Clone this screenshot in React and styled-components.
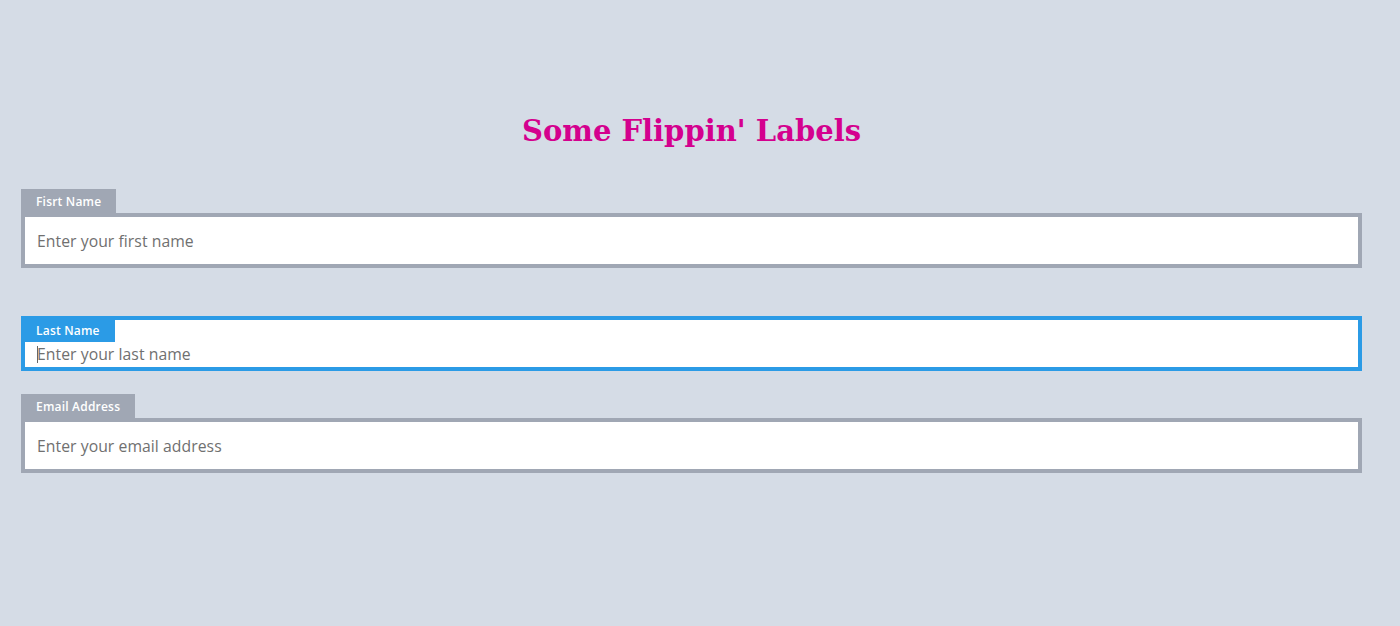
import React from "react";
import styled, { createGlobalStyle, css } from "styled-components";

const Global = createGlobalStyle`
  html, body { margin: 0; padding: 0; background: #d5dce6; }
  body { font-family: "Open Sans", "Liberation Sans", sans-serif; }
  * { box-sizing: border-box; }
`;

const Page = styled.div`
  width: 1400px;
  height: 626px;
  background: #d5dce6;
  padding: 112px 0 0 21px;
`;

const Form = styled.form`
  width: 1341px;
  display: flex;
  flex-direction: column;
  gap: 23.5px;
`;

const Title = styled.h1`
  margin: 0 0 -0.5px;
  height: 54px;
  text-align: center;
  font-family: "DejaVu Serif", "Liberation Serif", serif;
  font-weight: 700;
  font-size: 29px;
  line-height: 39px;
  color: #d4008e;
`;

const Field = styled.div`
  display: flex;
  flex-direction: column;
  height: 79px;
  ${(p) => p.$focused && css`padding-top: 24px;`}
`;

const Tab = styled.label`
  align-self: flex-start;
  height: 24px;
  line-height: 25px;
  padding: 0 15px;
  background: #a0a7b4;
  color: #fff;
  font-family: "Open Sans", "Liberation Sans", sans-serif;
  font-weight: 600;
  font-size: 12px;
  letter-spacing: 0.2px;
  ${(p) =>
    p.$focused &&
    css`
      height: 22px;
      line-height: 21px;
      padding: 0 15px 0 11px;
      background: #2b9be6;
    `}
`;

const Box = styled.div`
  flex: 1;
  display: flex;
  flex-direction: column;
  border: 4px solid ${(p) => (p.$focused ? "#2b9be6" : "#a0a7b4")};
  background: #fff;
`;

const InputWrap = styled.div`
  position: relative;
  flex: 1;
  display: flex;
`;

const Input = styled.input`
  flex: 1;
  min-height: 0;
  border: 0;
  outline: none;
  background: transparent;
  padding: 0 12px;
  font-family: "Open Sans", "Liberation Sans", sans-serif;
  font-size: 15.75px;
  letter-spacing: 0.05px;
  color: #333;
  caret-color: transparent;
  &::placeholder { color: #707070; }
`;

const Caret = styled.span`
  position: absolute;
  left: 12px;
  top: 4px;
  width: 1px;
  height: 17px;
  background: #666;
  pointer-events: none;
`;

function TextField({ label, placeholder, focused, type = "text", id }) {
  if (focused) {
    return (
      <Field $focused>
        <Box $focused>
          <Tab $focused htmlFor={id}>{label}</Tab>
          <InputWrap>
            <Input id={id} type={type} placeholder={placeholder} autoFocus />
            <Caret />
          </InputWrap>
        </Box>
      </Field>
    );
  }
  return (
    <Field>
      <Tab htmlFor={id}>{label}</Tab>
      <Box>
        <InputWrap>
          <Input id={id} type={type} placeholder={placeholder} />
        </InputWrap>
      </Box>
    </Field>
  );
}

export default function App() {
  return (
    <Page>
      <Global />
      <Form onSubmit={(e) => e.preventDefault()}>
        <Title>Some Flippin' Labels</Title>
        <TextField id="first" label="Fisrt Name" placeholder="Enter your first name" />
        <TextField id="last" label="Last Name" placeholder="Enter your last name" focused />
        <TextField id="email" type="email" label="Email Address" placeholder="Enter your email address" />
      </Form>
    </Page>
  );
}
